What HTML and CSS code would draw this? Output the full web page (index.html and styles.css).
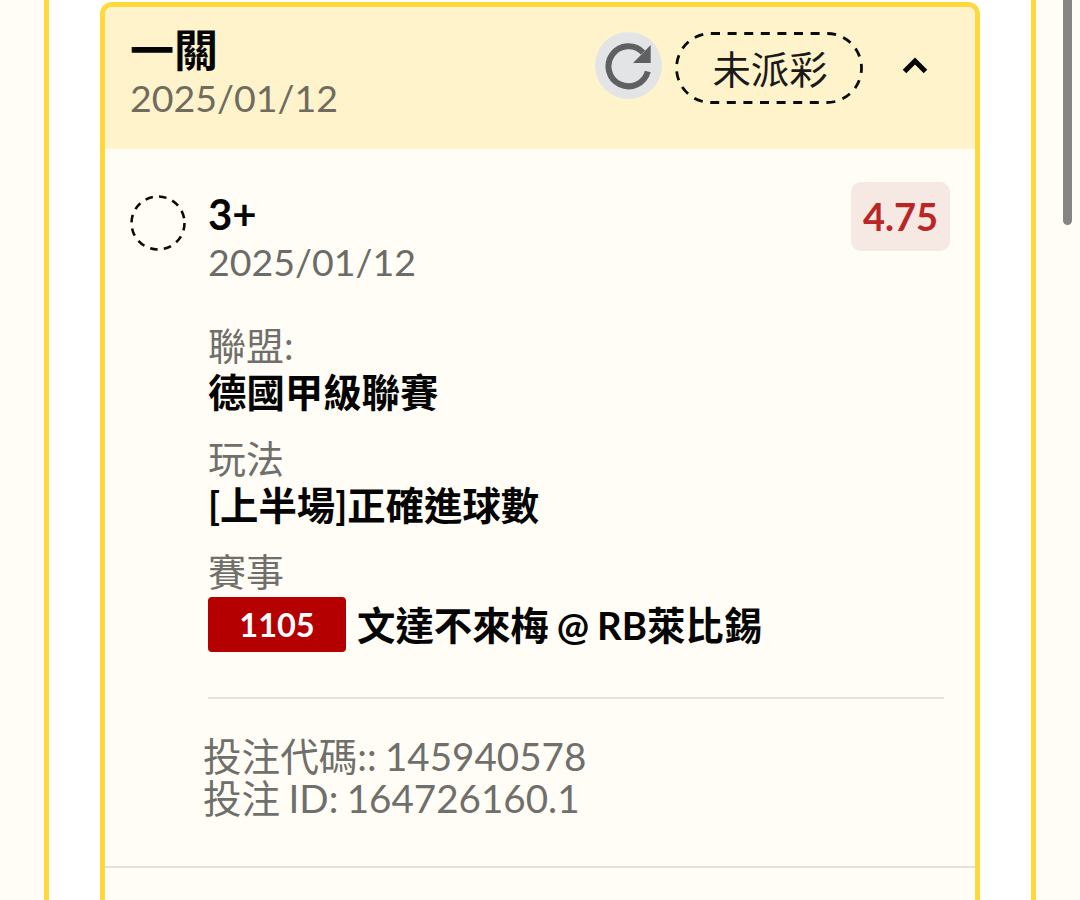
FILE: index.html
```html
<!DOCTYPE html>
<html lang="zh-Hant">
<head>
<meta charset="utf-8">
<title>一關</title>
<link rel="stylesheet" href="styles.css">
</head>
<body>
<div class="frame">
  <section class="card">
    <header class="head">
      <div class="head-text">
        <div class="title">一關</div>
        <div class="date">2025/01/12</div>
      </div>
      <div class="refresh">
        <svg width="48" height="48" viewBox="0 0 48 48"><path d="M38 10.5A20 20 0 1 0 42.8 29.5" fill="none" stroke="#5f6062" stroke-width="6"/><path d="M45.7 3v18H28z" fill="#5f6062"/></svg>
      </div>
      <div class="status">
        <svg class="status-ring" width="190" height="72" viewBox="0 0 190 72"><rect x="1.5" y="1.5" width="185" height="69" rx="34.5" fill="none" stroke="#0b0b0b" stroke-width="2.8" stroke-dasharray="9 7.6"/></svg>
        未派彩
      </div>
      <svg class="chev" width="28" height="20" viewBox="0 0 28 20"><path d="M3.5 15.5L14 5l10.5 10.5" fill="none" stroke="#050505" stroke-width="5"/></svg>
    </header>
    <div class="body">
      <div class="bet">
        <svg class="pending" width="56" height="56" viewBox="0 0 56 56"><circle cx="28" cy="28" r="26.5" fill="none" stroke="#0b0b0b" stroke-width="2.6" stroke-dasharray="7.6 6.3"/></svg>
        <div class="bet-main">
          <div class="pick">3+</div>
          <div class="date">2025/01/12</div>
          <div class="field">
            <div class="label">聯盟:</div>
            <div class="value">德國甲級聯賽</div>
          </div>
          <div class="field">
            <div class="label">玩法</div>
            <div class="value">[上半場]正確進球數</div>
          </div>
          <div class="field">
            <div class="label">賽事</div>
            <div class="match">
              <span class="code">1105</span>
              <span class="value">文達不來梅 @ RB萊比錫</span>
            </div>
          </div>
          <div class="ids">
            <div>投注代碼:: 145940578</div>
            <div>投注 ID: 164726160.1</div>
          </div>
        </div>
        <div class="odds">4.75</div>
      </div>
    </div>
  </section>
</div>
<div class="scrollbar"></div>
</body>
</html>
```
FILE: styles.css
```css
* { box-sizing: border-box; }
html, body { margin: 0; height: 900px; overflow: hidden; }
body {
  background: #fffdf5;
  font-family: Lato, "Noto Sans CJK TC", sans-serif;
  color: #050505;
  position: relative;
}
.frame {
  width: 992px;
  height: 900px;
  margin-left: 44px;
  padding: 2px 51px 0;
  background: #fff;
  border-left: 5px solid #ffd93b;
  border-right: 5px solid #ffd93b;
}
.card {
  width: 880px;
  height: 910px;
  background: #fffdf5;
  border: 5px solid #ffd93b;
  border-radius: 12px;
  overflow: hidden;
}
.head {
  height: 142px;
  background: #fff3cc;
  display: flex;
  align-items: flex-start;
  padding: 19px 46px 0 25px;
}
.head-text { flex: 1; }
.title { font-size: 44px; line-height: 49px; font-weight: 700; }
.date { font-size: 37.5px; line-height: 45px; color: #6f6b5e; }
.refresh {
  width: 67px; height: 67px; margin-top: 6px;
  border-radius: 50%;
  background: #e3e4e6;
  display: flex; align-items: center; justify-content: center;
}
.status {
  width: 188px; height: 72px;
  margin: 6px 0 0 14px;
  position: relative;
  font-size: 38.4px; line-height: 75px;
  text-align: center;
  color: #1a1a1a;
}
.status-ring { position: absolute; left: -1px; top: 0; }
.chev { margin: 30px 0 0 37px; }
.body {
  position: relative;
  height: 719px;
  padding: 33px 0 0 25px;
  border-bottom: 2px solid #e4e2dc;
}
.bet {
  display: flex;
  align-items: flex-start;
  height: 684px;
}
.pending {
  margin-top: 13px;
  flex: none;
}
.bet-main { margin-left: 22px; width: 736px; }
.pick { font-size: 42px; line-height: 50px; font-weight: 700; margin-top: 7px; }
.bet-main .date { color: #6b6b67; margin-bottom: 37px; }
.field { margin-top: 19px; }
.label { font-size: 38px; line-height: 48px; color: #6f6f6b; }
.value { font-size: 38.4px; line-height: 46px; font-weight: 700; word-spacing: -1.5px; }
.match { display: flex; align-items: center; gap: 11px; margin-top: 2px; }
.code {
  width: 138px; height: 55px;
  background: #b40000;
  border-radius: 4px;
  color: #fff;
  font-size: 32.5px; line-height: 55px; font-weight: 700;
  text-align: center;
}
.ids {
  margin-top: 45px;
  padding-top: 36px;
  border-top: 2px solid #e4e2dc;
  font-size: 38.6px; line-height: 42px;
  color: #6f6f6b;
  text-indent: -5px;
  word-spacing: -1.5px;
}
.odds {
  width: 99px; height: 69px;
  flex: none;
  border-radius: 10px;
  background: #f6e8e2;
  color: #b92626;
  font-size: 38px; line-height: 69px; font-weight: 700;
  text-align: center;
  margin-left: -93px;
}
.scrollbar {
  position: absolute; left: 1063px; top: 0;
  width: 9px; height: 225px;
  background: #858585;
  border-radius: 0 0 5px 5px;
}
```
